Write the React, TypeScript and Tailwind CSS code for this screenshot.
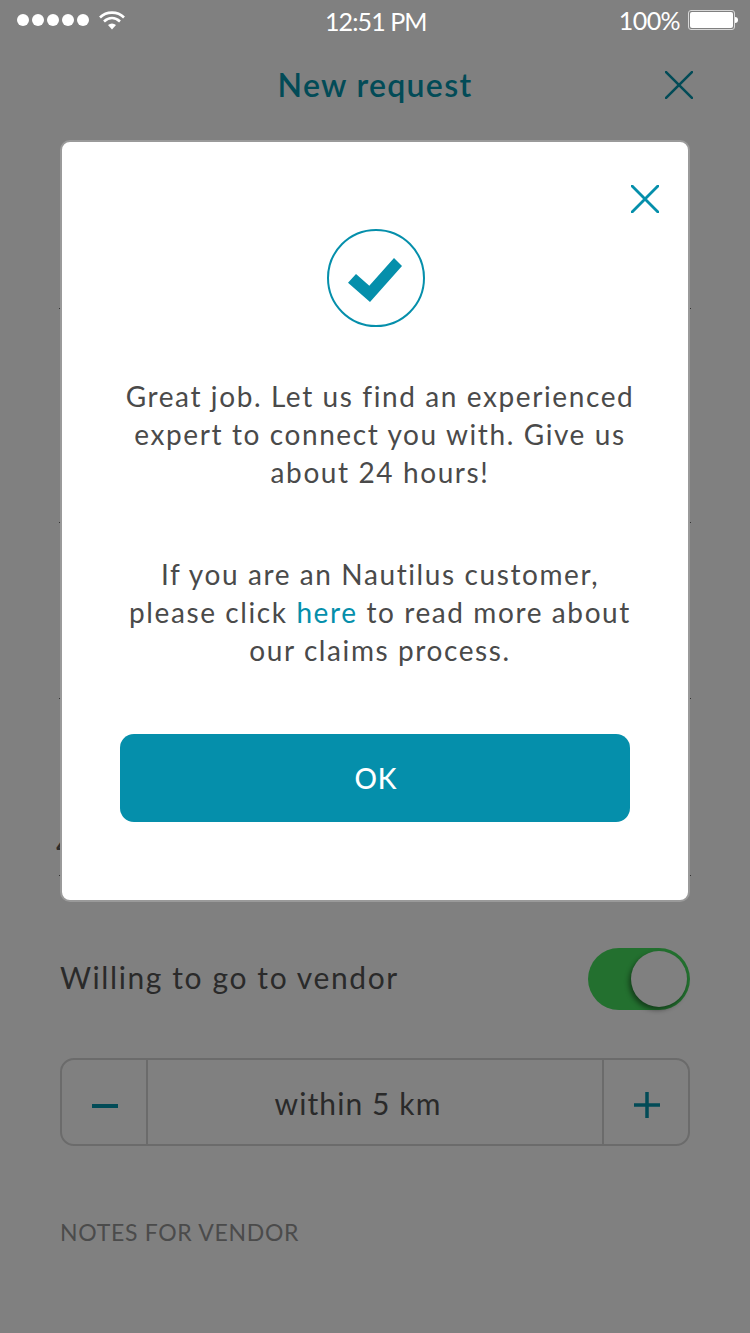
const FONT = "font-['Lato','Open_Sans',sans-serif]";

function StatusBar() {
  return (
    <div className="relative flex h-10 items-center justify-between pl-[17px] pr-[12px] text-white">
      <div className="flex items-center gap-[3px]">
        {[0, 1, 2, 3, 4].map((i) => (
          <span key={i} className="size-[12px] rounded-full bg-white" />
        ))}
        <svg width="26" height="20" viewBox="0 0 26 20" className="ml-[7px]">
          <path d="M1 7.5C7.5 1 18.5 1 25 7.5" fill="none" stroke="#fff" strokeWidth="2.6" />
          <path d="M5 11.5C10 7 16 7 21 11.5" fill="none" stroke="#fff" strokeWidth="2.6" />
          <path d="M9 15C11.5 13 14.500 13 17 15L13 19.500Z" fill="#fff" />
        </svg>
      </div>
      <span className="absolute left-[325px] top-[6px] font-['Lato'] text-[25px] font-normal leading-[30px] tracking-[-0.9px]">
        12:51 PM
      </span>
      <div className="flex items-center gap-[8px]">
        <span className="font-['Lato'] text-[25px] font-normal leading-[30px] tracking-[-0.6px]">100%</span>
        <div className="flex items-center">
          <div className="h-[20px] w-[47px] rounded-[3px] border border-[#d8d8d8] p-[1px]">
            <div className="size-full rounded-[2px] bg-white" />
          </div>
          <div className="h-[6px] w-[3px] rounded-r-full bg-white" />
        </div>
      </div>
    </div>
  );
}

function Divider() {
  return <div className="-mx-px h-px bg-[#333]" />;
}

function Cross({ size, color, width }: { size: number; color: string; width: number }) {
  return (
    <svg width={size} height={size} viewBox="0 0 26 26">
      <path d="M1 1L25 25M25 1L1 25" fill="none" stroke={color} strokeWidth={width} strokeLinecap="round" />
    </svg>
  );
}

export default function App() {
  return (
    <div className={`${FONT} relative h-[1333px] w-[750px] overflow-hidden bg-[#808080]`}>
      <StatusBar />
      <header className="relative flex h-[92px] items-center justify-center">
        <h1 className="pb-[2px] text-[32px] font-semibold tracking-[1.3px] text-[#024b57]">New request</h1>
        <div className="absolute left-[665px] top-[31px] flex">
          <Cross size={28} color="#024b57" width={2.4} />
        </div>
      </header>

      {/* form behind the dialog */}
      <div className="px-[60px]">
        <div className="h-[176px]" />
        <Divider />
        <div className="h-[213px]" />
        <Divider />
        <div className="h-[175px]" />
        <Divider />
        <div className="-ml-[4px] flex h-[176px] items-end pb-[15px] text-[32px] leading-none text-[#2c2c2c]">4</div>
        <Divider />

        <div className="mt-[72px] flex items-center justify-between">
          <span className="pb-[4px] text-[30px] tracking-[1.6px] text-[#2a2a2a]">Willing to go to vendor</span>
          <div className="relative flex h-[62px] w-[102px] justify-end rounded-full bg-[#23702f] p-[3px]">
            <div className="size-[56px] rounded-full bg-[#808080] shadow-[-2px_3px_5px_rgba(0,0,0,0.45)]" />
          </div>
        </div>

        <div className="mt-[48px] flex h-[88px] items-stretch rounded-[14px] border-2 border-[#6b6b6b]">
          <div className="flex w-[86px] items-center justify-center border-r-2 border-[#6b6b6b]">
            <div className="ml-[2px] mt-[7px] h-[4px] w-[26px] bg-[#024b57]" />
          </div>
          <div className="flex flex-1 items-center justify-center pr-[34px] pt-[2px] text-[30px] tracking-[1.1px] text-[#2a2a2a]">within 5 km</div>
          <div className="flex w-[86px] items-center justify-center border-l-2 border-[#6b6b6b]">
            <svg width="26" height="26" viewBox="0 0 26 26" className="ml-[2px] mt-[6px]">
              <path d="M13 0V26M0 13H26" stroke="#024b57" strokeWidth="3.5" />
            </svg>
          </div>
        </div>

        <div className="mt-[69px] text-[23px] tracking-[0.7px] text-[#4b4b4b]">NOTES FOR VENDOR</div>
      </div>

      {/* dialog */}
      <div className="absolute left-[60px] top-[140px] flex h-[762px] w-[630px] flex-col items-center rounded-[10px] border-2 border-[#9a9a9a] bg-white">
        <div className="absolute right-[29px] top-[43px] flex">
          <Cross size={28} color="#058fab" width={2.6} />
        </div>
        <div className="ml-[2px] mt-[87px] flex size-[98px] items-center justify-center rounded-full border-2 border-[#058fab]">
          <svg width="54" height="44" viewBox="0 0 54 44" className="-ml-[2px] mt-[4px]">
            <path d="M0 24.700L8 16L21.300 27.700L46 0L54 8L22 44Z" fill="#058fab" />
          </svg>
        </div>
        <p className="mt-[50px] pl-[10px] text-center text-[28px] leading-[38px] tracking-[1.6px] text-[#4a4a4a]">
          Great job. Let us find an experienced
          <br />
          expert to connect you with. Give us
          <br />
          about 24 hours!
        </p>
        <p className="mt-[64px] pl-[10px] text-center text-[28px] leading-[38px] tracking-[1.6px] text-[#4a4a4a]">
          If you are an Nautilus customer,
          <br />
          please click <span className="text-[#058fab]">here</span> to read more about
          <br />
          our claims process.
        </p>
        <button className="mt-[65px] flex h-[88px] w-[510px] items-center justify-center rounded-[14px] bg-[#058fab] pl-[2px] text-[28px] font-medium tracking-[1px] text-white">
          OK
        </button>
      </div>
    </div>
  );
}
